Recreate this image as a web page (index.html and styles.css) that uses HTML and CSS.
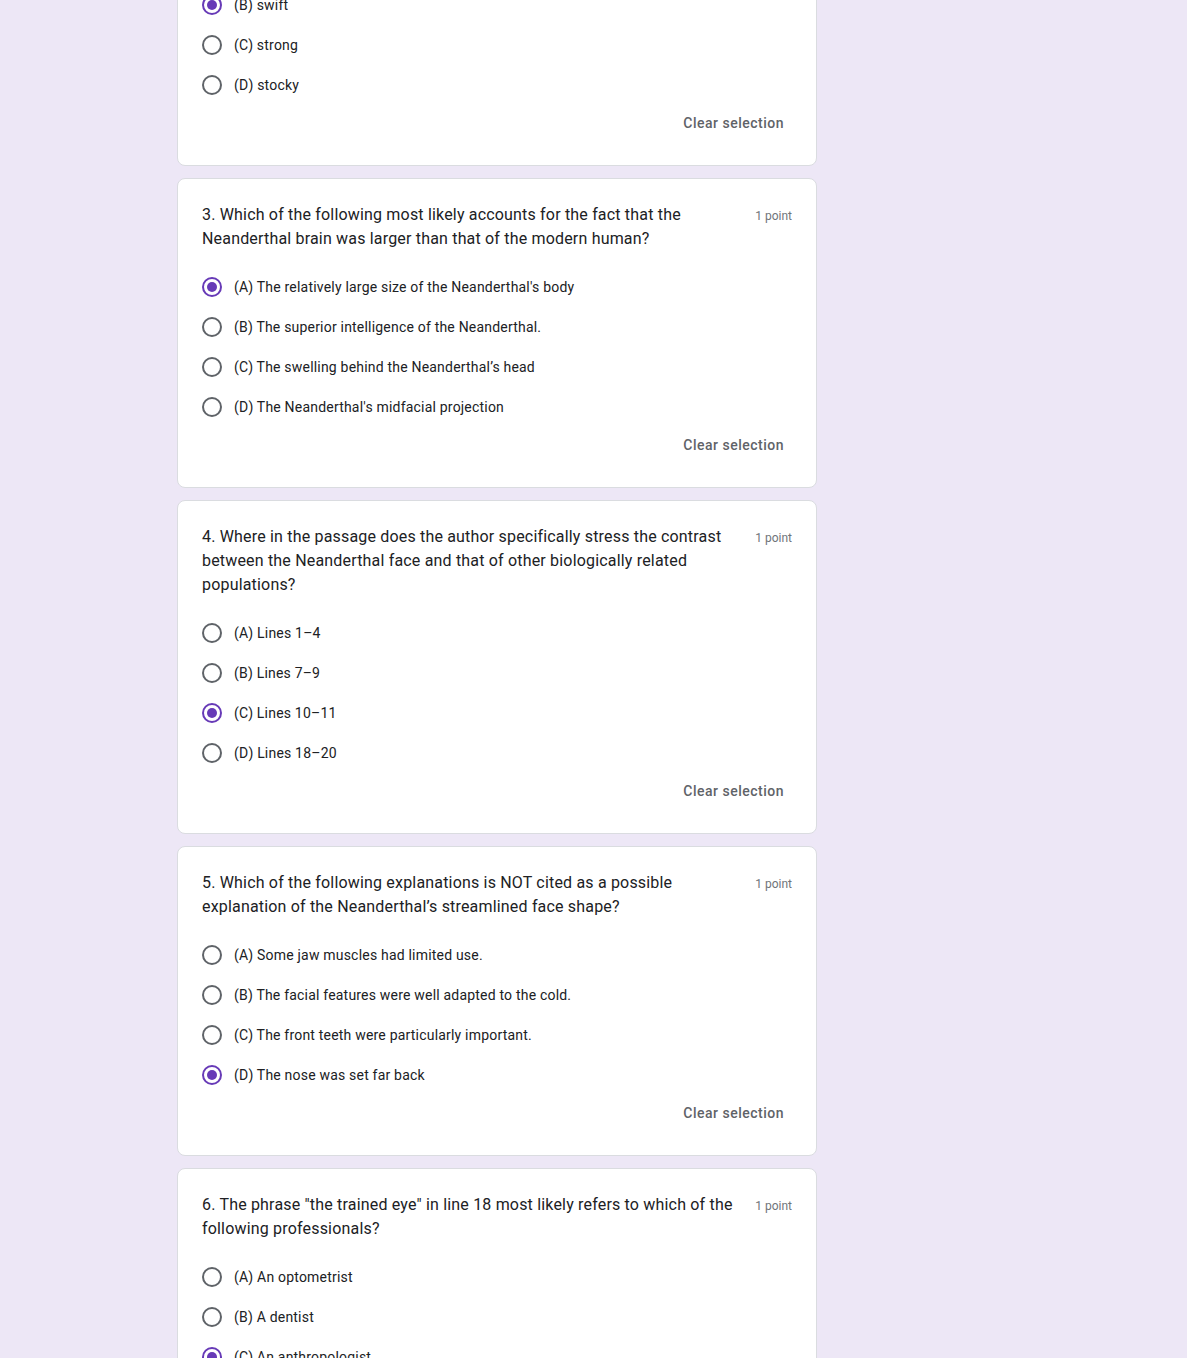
FILE: index.html
```html
<!DOCTYPE html>
<html lang="en">
<head>
<meta charset="utf-8">
<title>Quiz</title>
<link rel="stylesheet" href="styles.css">
</head>
<body>
<main class="form">
  <section class="card card-partial">
    <div class="options">
      <label class="option"><span class="radio checked"></span><span class="opt-text">(B) swift</span></label>
      <label class="option"><span class="radio"></span><span class="opt-text">(C) strong</span></label>
      <label class="option"><span class="radio"></span><span class="opt-text">(D) stocky</span></label>
    </div>
    <div class="actions"><button class="clear">Clear selection</button></div>
  </section>

  <section class="card">
    <div class="q-head">
      <div class="q-title">3. Which of the following most likely accounts for the fact that the Neanderthal brain was larger than that of the modern human?</div>
      <div class="points">1 point</div>
    </div>
    <div class="options">
      <label class="option"><span class="radio checked"></span><span class="opt-text">(A) The relatively large size of the Neanderthal's body</span></label>
      <label class="option"><span class="radio"></span><span class="opt-text">(B) The superior intelligence of the Neanderthal.</span></label>
      <label class="option"><span class="radio"></span><span class="opt-text">(C) The swelling behind the Neanderthal’s head</span></label>
      <label class="option"><span class="radio"></span><span class="opt-text">(D) The Neanderthal's midfacial projection</span></label>
    </div>
    <div class="actions"><button class="clear">Clear selection</button></div>
  </section>

  <section class="card">
    <div class="q-head">
      <div class="q-title">4. Where in the passage does the author specifically stress the contrast between the Neanderthal face and that of other biologically related populations?</div>
      <div class="points">1 point</div>
    </div>
    <div class="options">
      <label class="option"><span class="radio"></span><span class="opt-text">(A) Lines 1–4</span></label>
      <label class="option"><span class="radio"></span><span class="opt-text">(B) Lines 7–9</span></label>
      <label class="option"><span class="radio checked"></span><span class="opt-text">(C) Lines 10–11</span></label>
      <label class="option"><span class="radio"></span><span class="opt-text">(D) Lines 18–20</span></label>
    </div>
    <div class="actions"><button class="clear">Clear selection</button></div>
  </section>

  <section class="card">
    <div class="q-head">
      <div class="q-title">5. Which of the following explanations is NOT cited as a possible explanation of the Neanderthal’s streamlined face shape?</div>
      <div class="points">1 point</div>
    </div>
    <div class="options">
      <label class="option"><span class="radio"></span><span class="opt-text">(A) Some jaw muscles had limited use.</span></label>
      <label class="option"><span class="radio"></span><span class="opt-text">(B) The facial features were well adapted to the cold.</span></label>
      <label class="option"><span class="radio"></span><span class="opt-text">(C) The front teeth were particularly important.</span></label>
      <label class="option"><span class="radio checked"></span><span class="opt-text">(D) The nose was set far back</span></label>
    </div>
    <div class="actions"><button class="clear">Clear selection</button></div>
  </section>

  <section class="card">
    <div class="q-head">
      <div class="q-title">6. The phrase "the trained eye" in line 18 most likely refers to which of the following professionals?</div>
      <div class="points">1 point</div>
    </div>
    <div class="options">
      <label class="option"><span class="radio"></span><span class="opt-text">(A) An optometrist</span></label>
      <label class="option"><span class="radio"></span><span class="opt-text">(B) A dentist</span></label>
      <label class="option"><span class="radio checked"></span><span class="opt-text">(C) An anthropologist</span></label>
      <label class="option"><span class="radio"></span><span class="opt-text">(D) A plastic surgeon</span></label>
    </div>
    <div class="actions"><button class="clear">Clear selection</button></div>
  </section>
</main>
</body>
</html>
```

FILE: styles.css
```css
html, body {
  margin: 0;
  padding: 0;
  background: #ede7f6;
  height: 100%;
  overflow: hidden;
}

body {
  font-family: Roboto, "Liberation Sans", Arial, sans-serif;
  color: #202124;
}

.form {
  width: 640px;
  margin: -40px 0 0 177px;
  display: flex;
  flex-direction: column;
  gap: 12px;
}

.card {
  background: #fff;
  border: 1px solid #dadce0;
  border-radius: 8px;
  padding: 24px;
  display: flex;
  flex-direction: column;
}

.q-head {
  display: flex;
  align-items: flex-start;
  gap: 16px;
}

.q-title {
  flex: 1;
  font-family: Roboto, "Liberation Sans", Arial, sans-serif;
  font-size: 16px;
  line-height: 24px;
  letter-spacing: 0.18px;
  color: #202124;
}

.points {
  font-size: 12px;
  line-height: 16px;
  letter-spacing: 0;
  color: #70757a;
  padding-top: 5px;
  white-space: nowrap;
}

.options {
  display: flex;
  flex-direction: column;
}

.q-head + .options {
  margin-top: 16px;
}

.option {
  display: flex;
  align-items: center;
  height: 40px;
  gap: 12px;
}

.radio {
  box-sizing: border-box;
  width: 20px;
  height: 20px;
  border: 2px solid #5f6368;
  border-radius: 50%;
  display: flex;
  align-items: center;
  justify-content: center;
  flex-shrink: 0;
}

.radio.checked {
  border-color: #673ab7;
}

.radio.checked::after {
  content: "";
  width: 10px;
  height: 10px;
  border-radius: 50%;
  background: #673ab7;
}

.opt-text {
  font-size: 14px;
  line-height: 20px;
  letter-spacing: 0.2px;
  color: #202124;
}

.actions {
  display: flex;
  justify-content: flex-end;
}

.clear {
  font-family: Roboto, "Liberation Sans", Arial, sans-serif;
  font-size: 14px;
  font-weight: 500;
  letter-spacing: 0.5px;
  color: #5f6368;
  background: none;
  border: none;
  height: 36px;
  padding: 0 8px;
  cursor: pointer;
}
```
